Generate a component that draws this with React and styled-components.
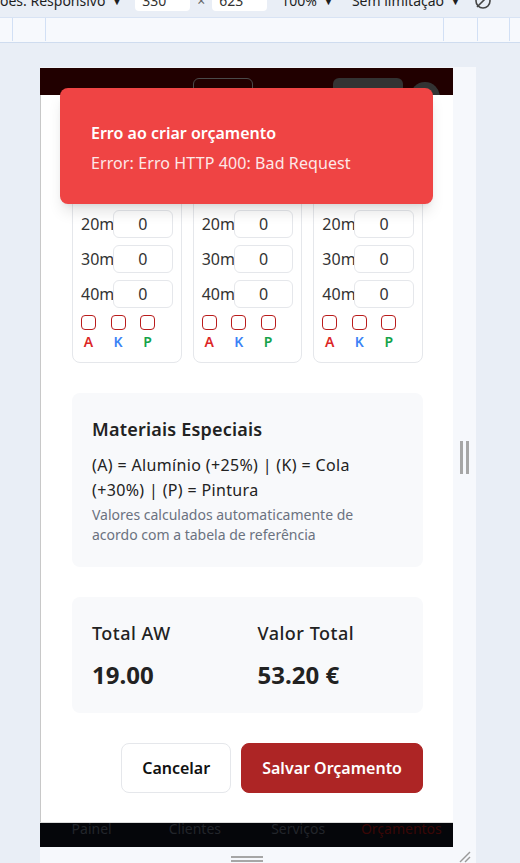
import React from 'react';
import styled, { createGlobalStyle } from 'styled-components';

const GlobalStyle = createGlobalStyle`
	html, body {
		margin: 0;
		padding: 0;
		background: #e9eef6;
		overflow: hidden;
	}
	* {
		box-sizing: border-box;
	}
`;

const Page = styled.div`
	width: 520px;
	height: 863px;
	display: flex;
	flex-direction: column;
	overflow: hidden;
	font-family: "Noto Sans", "Open Sans", sans-serif;
	background: #e9eef6;
`;

/* devtools bar, mostly scrolled out of view */
const DevBar = styled.div`
	height: 12px;
	display: flex;
	align-items: flex-end;
	overflow: hidden;
	padding-bottom: 1px;
	font-size: 14px;
	line-height: 20px;
	color: #1f1f1f;
	white-space: nowrap;
`;

const DevText = styled.span`
	margin-left: ${(p) => p.$ml || 0}px;
	display: flex;
	align-items: center;
	gap: 6px;
`;

const Caret = styled.span`
	font-size: 11px;
`;

const DimInput = styled.span`
	width: 55px;
	height: 20px;
	margin-left: ${(p) => p.$ml || 0}px;
	padding-left: 7px;
	background: #fff;
	border-radius: 4px;
	color: #333;
`;

const Times = styled.span`
	margin-left: 7px;
	color: #666;
`;

const Ruler = styled.div`
	margin-top: 5px;
	height: 26px;
	display: flex;
	background: #f7f9fd;
	border-top: 1px solid #d8e3f4;
	border-bottom: 1px solid #cfdcef;
	padding-bottom: 1px;
`;

const RulerCell = styled.div`
	width: ${(p) => p.$w}px;
	flex: none;
	border-right: 1px solid #d2e0f5;
`;

const Stage = styled.div`
	flex: 1;
	padding: 24px 0 0 40px;
`;

const Device = styled.div`
	width: 436px;
	display: grid;
	grid-template-columns: 413px 23px;
	grid-template-rows: 780px 16px;
	background: #f6f8fc;
`;

const Viewport = styled.div`
	position: relative;
	display: flex;
	flex-direction: column;
	overflow: hidden;
	border-top: 1px solid #f2f4f8;
`;

const AppHeader = styled.div`
	height: 27px;
	flex: none;
	display: flex;
	align-items: flex-start;
	padding: 10px 0 0 153px;
	background: #210000;
	overflow: hidden;
`;

const OutlineBtn = styled.div`
	width: 60px;
	height: 26px;
	border: 1px solid #4a4a4a;
	border-radius: 6px;
`;

const DarkPill = styled.div`
	width: 70px;
	height: 26px;
	margin-left: 80px;
	border-radius: 6px;
	background: #333;
`;

const Avatar = styled.div`
	width: 30px;
	height: 30px;
	margin: 4px 0 0 7px;
	border-radius: 50%;
	background: #333;
`;

const Content = styled.div`
	flex: 1;
	overflow: hidden;
	background: #fff;
	border-left: 1px solid #c8c8c8;
	padding: 8px 30px 0 31px;
	display: flex;
	flex-direction: column;
	gap: 30px;
	color: #222;
`;

const TitleBlock = styled.div`
	margin-bottom: -22px;
`;

const PageTitle = styled.h2`
	margin: 0;
	font-size: 20px;
	line-height: 28px;
	font-weight: 700;
`;

const CardGrid = styled.div`
	display: grid;
	grid-template-columns: repeat(3, 1fr);
	gap: 11px;
`;

const Card = styled.div`
	border: 1px solid #e5e7eb;
	border-radius: 8px;
	padding: 8px 8px 12px 8px;
	display: flex;
	flex-direction: column;
	gap: 7px;
`;

const CardTitle = styled.div`
	font-size: 14px;
	line-height: 20px;
	font-weight: 600;
	margin-bottom: 0;
`;

const SizeRow = styled.div`
	display: flex;
	align-items: center;
	height: 28px;
`;

const SizeLabel = styled.span`
	width: 32px;
	flex: none;
	font-size: 16px;
	color: #333;
`;

const SizeInput = styled.div`
	flex: 1;
	height: 28px;
	border: 1px solid #e5e7eb;
	border-radius: 6px;
	display: flex;
	align-items: center;
	justify-content: center;
	font-size: 16px;
	color: #333;
`;

const MatRow = styled.div`
	display: flex;
	gap: 14.5px;
`;

const MatCol = styled.div`
	width: 15px;
	display: flex;
	flex-direction: column;
	align-items: center;
	gap: 4px;
`;

const Check = styled.span`
	width: 15px;
	height: 15px;
	border: 1.5px solid #b91c1c;
	border-radius: 4px;
`;

const MatLetter = styled.span`
	font-size: 14px;
	line-height: 16px;
	font-weight: 600;
	color: ${(p) => p.$color};
`;

const InfoBox = styled.div`
	background: #f8f9fb;
	border-radius: 8px;
	padding: ${(p) => p.$pad};
`;

const InfoTitle = styled.h3`
	margin: 0 0 10px;
	font-size: 18px;
	line-height: 28px;
	font-weight: 600;
	letter-spacing: 0.2px;
	color: #222;
`;

const InfoText = styled.p`
	margin: 0;
	font-size: 16px;
	line-height: 25px;
	letter-spacing: 0.35px;
`;

const InfoNote = styled.p`
	margin: 2px 0 0;
	font-size: 14px;
	line-height: 20px;
	color: #6b7280;
`;

const TotalsGrid = styled.div`
	display: grid;
	grid-template-columns: 1fr 1fr;
	column-gap: 20px;
`;

const TotalLabel = styled.div`
	font-size: 18px;
	line-height: 28px;
	font-weight: 500;
	letter-spacing: 0.5px;
	margin-bottom: 12px;
`;

const TotalValue = styled.div`
	font-size: 24px;
	line-height: 32px;
	font-weight: 700;
`;

const Actions = styled.div`
	display: flex;
	justify-content: flex-end;
	gap: 10px;
`;

const Button = styled.button`
	height: 50px;
	padding: 0 20px;
	border-radius: 8px;
	font-family: inherit;
	font-size: 16px;
	font-weight: 600;
	border: 1px solid ${(p) => (p.$primary ? '#ad2525' : '#e5e7eb')};
	background: ${(p) => (p.$primary ? '#ad2525' : '#fff')};
	color: ${(p) => (p.$primary ? '#fff' : '#111')};
`;

const BottomNav = styled.div`
	height: 25px;
	flex: none;
	border-top: 1px solid #dcdcdc;
	background: #05060a;
	display: grid;
	grid-template-columns: repeat(4, 1fr);
	overflow: hidden;
`;

const NavItem = styled.span`
	text-align: center;
	font-size: 14px;
	line-height: 12px;
	color: ${(p) => (p.$active ? '#3a0606' : '#22252b')};
`;

const Toast = styled.div`
	position: absolute;
	left: 20px;
	top: 20px;
	width: 373px;
	padding: 33px 31px 29px 31px;
	background: #ef4444;
	border-radius: 8px;
	box-shadow: 0 10px 15px -3px rgba(0, 0, 0, 0.12), 0 4px 6px -4px rgba(0, 0, 0, 0.1);
	color: #fff;
`;

const ToastTitle = styled.div`
	font-size: 16px;
	line-height: 24px;
	font-weight: 600;
	margin-bottom: 6px;
`;

const ToastBody = styled.div`
	font-size: 16px;
	line-height: 24px;
	letter-spacing: 0.1px;
	color: #fde8e8;
`;

const SideHandle = styled.div`
	display: flex;
	align-items: center;
	justify-content: center;
	gap: 3px;
`;

const Bar = styled.span`
	width: ${(p) => (p.$h ? '32px' : '3px')};
	height: ${(p) => (p.$h ? '2px' : '33px')};
	background: #a6a6a6;
`;

const BottomHandle = styled.div`
	display: flex;
	flex-direction: column;
	align-items: center;
	gap: 2px;
	padding-top: 9px;
`;

const Corner = styled.div`
	display: flex;
	justify-content: flex-start;
	padding: 2px 0 0 4px;
`;

const panels = [1, 2, 3];
const sizes = ['10m', '20m', '30m', '40m'];
const materials = [
	{ key: 'A', color: '#dc2626' },
	{ key: 'K', color: '#3b82f6' },
	{ key: 'P', color: '#16a34a' },
];

export default function App() {
	return (
		<Page>
			<GlobalStyle />
			<DevBar>
				<DevText>ões. Responsivo <Caret>▼</Caret></DevText>
				<DimInput $ml={13}>330</DimInput>
				<Times>×</Times>
				<DimInput $ml={7}>623</DimInput>
				<DevText $ml={14}>100% <Caret>▼</Caret></DevText>
				<DevText $ml={18}>Sem limitação <Caret>▼</Caret></DevText>
				<DevText $ml={12}>
					<svg width="20" height="20" viewBox="0 0 20 20" fill="none" stroke="#444" strokeWidth="1.6">
						<circle cx="10" cy="10" r="7" />
						<path d="M4 16 L16 4" />
					</svg>
				</DevText>
			</DevBar>
			<Ruler>
				<RulerCell $w={13} />
				<RulerCell $w={33} />
				<RulerCell $w={398} />
				<RulerCell $w={34} />
				<RulerCell $w={32} />
			</Ruler>
			<Stage>
				<Device>
					<Viewport>
						<AppHeader>
							<OutlineBtn />
							<DarkPill />
							<Avatar />
						</AppHeader>
						<Content>
							<TitleBlock>
								<PageTitle>Novo Orçamento</PageTitle>
							</TitleBlock>
							<CardGrid>
								{panels.map((n) => (
									<Card key={n}>
										<CardTitle>Porta {n}</CardTitle>
										{sizes.map((s) => (
											<SizeRow key={s}>
												<SizeLabel>{s}</SizeLabel>
												<SizeInput>0</SizeInput>
											</SizeRow>
										))}
										<MatRow>
											{materials.map((m) => (
												<MatCol key={m.key}>
													<Check />
													<MatLetter $color={m.color}>{m.key}</MatLetter>
												</MatCol>
											))}
										</MatRow>
									</Card>
								))}
							</CardGrid>
							<InfoBox $pad="22px 24px 22px 20px">
								<InfoTitle>Materiais Especiais</InfoTitle>
								<InfoText>(A) = Alumínio (+25%) | (K) = Cola (+30%) | (P) = Pintura</InfoText>
								<InfoNote>Valores calculados automaticamente de acordo com a tabela de referência</InfoNote>
							</InfoBox>
							<InfoBox $pad="22px 20px 22px 20px">
								<TotalsGrid>
									<div>
										<TotalLabel>Total AW</TotalLabel>
										<TotalValue>19.00</TotalValue>
									</div>
									<div>
										<TotalLabel>Valor Total</TotalLabel>
										<TotalValue>53.20 €</TotalValue>
									</div>
								</TotalsGrid>
							</InfoBox>
							<Actions>
								<Button type="button">Cancelar</Button>
								<Button type="button" $primary>Salvar Orçamento</Button>
							</Actions>
						</Content>
						<BottomNav>
							<NavItem>Painel</NavItem>
							<NavItem>Clientes</NavItem>
							<NavItem>Serviços</NavItem>
							<NavItem $active>Orçamentos</NavItem>
						</BottomNav>
						<Toast>
							<ToastTitle>Erro ao criar orçamento</ToastTitle>
							<ToastBody>Error: Erro HTTP 400: Bad Request</ToastBody>
						</Toast>
					</Viewport>
					<SideHandle>
						<Bar />
						<Bar />
					</SideHandle>
					<BottomHandle>
						<Bar $h />
						<Bar $h />
					</BottomHandle>
					<Corner>
						<svg width="14" height="14" viewBox="0 0 14 14" stroke="#9a9a9a" strokeWidth="1.4">
							<path d="M13 3 L3 13" />
							<path d="M13 8 L8 13" />
						</svg>
					</Corner>
				</Device>
			</Stage>
		</Page>
	);
}
